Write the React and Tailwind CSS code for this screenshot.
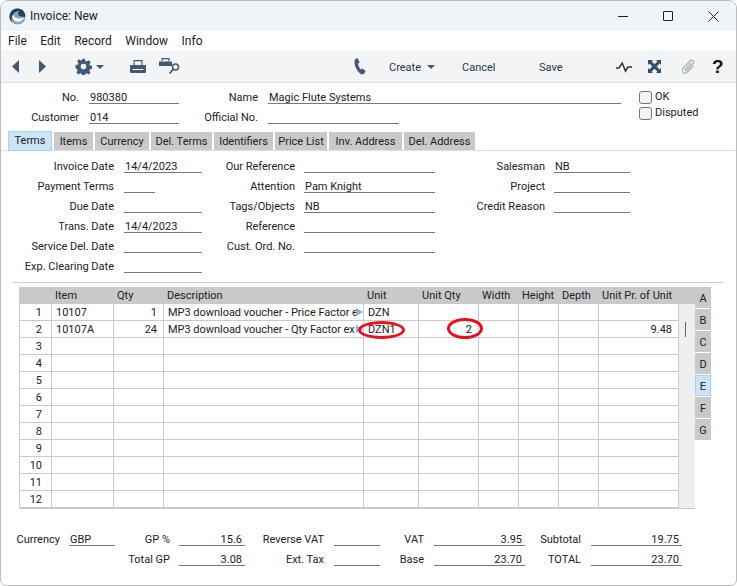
import React from 'react';

const tabs = [
  ['Terms', 'w-[44px]'],
  ['Items', 'w-[39px]'],
  ['Currency', 'w-[54px]'],
  ['Del. Terms', 'w-[61px]'],
  ['Identifiers', 'w-[59px]'],
  ['Price List', 'w-[52px]'],
  ['Inv. Address', 'w-[73px]'],
  ['Del. Address', 'w-[71px]'],
];

const cols = ['w-[32px]', 'w-[62px]', 'w-[50px]', 'w-[200px]', 'w-[55px]', 'w-[60px]', 'w-[40px]', 'w-[40px]', 'w-[40px]', 'w-[80px]'];
const heads = ['', 'Item', 'Qty', 'Description', 'Unit', 'Unit Qty', 'Width', 'Height', 'Depth', 'Unit Pr. of Unit'];

// descriptions are cut by the column in the screen, same as the reference
const rows = [
  ['1', '10107', '1', 'MP3 download voucher - Price Factor e', 'DZN', '', '', '', '', ''],
  ['2', '10107A', '24', 'MP3 download voucher - Qty Factor ex', 'DZN1', '2', '', '', '', '9.48'],
];
for (let i = 3; i <= 12; i++) rows.push([String(i), '', '', '', '', '', '', '', '', '']);

// label + underlined value
const Field = ({ label, labelW, w, value, right, gap = 'mr-[10px]' }) => (
  <div className="flex h-5 items-end">
    <span className={`${labelW} ${gap} h-[18px] text-right leading-[24px] whitespace-nowrap`}>{label}</span>
    <span className={`${w} h-[18px] border-b border-[#777] leading-[24px] ${right ? 'text-right pr-[3px]' : 'pl-[1px]'}`}>{value}</span>
  </div>
);

const Logo = () => (
  <svg width="17" height="17" viewBox="0 0 18 18">
    <circle cx="9" cy="9" r="8.500" fill="#8aa3b8" />
    <path d="M9 .5a8.500 8.500 0 00-6 14.500C1.500 10 4 4 11 3 9 5 9 7 11 8.500c2 1 4.500 1 6.500.5A8.500 8.500 0 009 .5z" fill="#20405f" />
    <path d="M3.500 9.500c1 3.500 4 5.500 7 5 2.500-.4 4.500-2 5.500-4.500-3 1.500-6 1.500-8 .5C6 10 5 9 5 7.500 4 8 3.700 8.700 3.500 9.500z" fill="#fff" />
  </svg>
);

const Gear = () => (
  <svg width="17" height="17" viewBox="0 0 24 24" fill="#3f5a76">
    <path fillRule="evenodd" d="M10 1h4l.6 3.200 2 .8 2.700-1.800 2.800 2.800-1.800 2.700.8 2 3.200.6v4l-3.200.6-.8 2 1.800 2.700-2.800 2.800-2.700-1.800-2 .8-.6 3.200h-4l-.6-3.200-2-.8-2.700 1.800-2.800-2.800 1.800-2.700-.8-2L.7 14v-4l3.200-.6.8-2-1.800-2.700 2.800-2.800 2.700 1.800 2-.8zM12 8a4 4 0 100 8 4 4 0 000-8z" />
  </svg>
);

const Printer = () => (
  <svg width="16" height="13" viewBox="0 0 16 13" fill="#3f5a76">
    <path d="M3.500 0h9v5h-1.200V1.200H4.700V5H3.500z" />
    <path d="M1 5h14a1 1 0 011 1v6a1 1 0 01-1 1H1a1 1 0 01-1-1V6a1 1 0 011-1zm1.500 4v1h11V9z" />
  </svg>
);

const PrintPreview = () => (
  <svg width="21" height="17" viewBox="0 0 21 17" fill="none">
    <path d="M2.500 0h8v3H9.300V1.200H3.700V3H2.500z" fill="#3f5a76" />
    <path d="M0 3.500h13v4.500H0z" fill="#3f5a76" />
    <circle cx="16.500" cy="9" r="3" stroke="#3f5a76" strokeWidth="1.500" />
    <path d="M14.200 11.300L10.500 15.500" stroke="#3f5a76" strokeWidth="1.800" />
  </svg>
);

const Phone = () => (
  <svg width="12" height="17" viewBox="0 0 12 17" fill="#3f5a76">
    <path d="M3.500 0L1 1.300C-.5 5 1.500 12.500 7.500 16.500L10.500 15.500 11.500 13 8.500 10.500 6.800 11.500C5 9.500 4.300 7.500 4 5.500L5.700 4.500z" />
  </svg>
);

const Caret = ({ color = '#3f5a76' }) => (
  <svg width="8" height="4" viewBox="0 0 8 4"><path d="M0 0h8L4 4z" fill={color} /></svg>
);

const CheckBox = ({ label }) => (
  <div className="flex h-4 items-center gap-[3px]">
    <span className="h-[13px] w-[13px] rounded-[3px] border border-[#777] bg-[#f4f4f4]" />
    <span>{label}</span>
  </div>
);

const App = () => {
  return (
    <div className="relative h-[586px] w-[737px] overflow-hidden rounded-t-lg rounded-b-md border border-[#bdbdbd] bg-white text-[11px] text-[#222] font-['Roboto',sans-serif]">
      {/* title bar */}
      <div className="flex h-[30px] items-center bg-[#eff4f9] text-[12px]">
        <div className="ml-[8px] mr-[4px] mt-[1px] flex"><Logo /></div>
        <span>Invoice: New</span>
        <div className="ml-auto flex items-center">
          <span className="h-px w-[10px] bg-[#222]" />
          <span className="ml-[35px] h-[10px] w-[10px] rounded-[1px] border border-[#222]" />
          <svg className="ml-[35px] mr-[17px]" width="11" height="11" viewBox="0 0 11 11">
            <path d="M.5.500l10 10M10.500.500l-10 10" stroke="#222" strokeWidth="1" />
          </svg>
        </div>
      </div>

      {/* menu */}
      <div className="flex h-[19px] items-center gap-[13.5px] pl-[7px] pt-[1px] text-[12px]">
        <span>File</span>
        <span>Edit</span>
        <span>Record</span>
        <span>Window</span>
        <span>Info</span>
      </div>

      {/* toolbar */}
      <div className="flex h-[33px] items-center border-b border-[#dcdcdc] bg-[#f3f4f5] pt-px text-[#24384d]">
        <svg className="ml-[11px]" width="7" height="13" viewBox="0 0 7 13"><path d="M7 0v13L0 6.500z" fill="#3f5a76" /></svg>
        <svg className="ml-[20px]" width="7" height="13" viewBox="0 0 7 13"><path d="M0 0v13l7-6.500z" fill="#3f5a76" /></svg>
        <div className="ml-[29px] flex"><Gear /></div>
        <div className="ml-[4px]"><Caret /></div>
        <div className="ml-[26px] flex"><Printer /></div>
        <div className="ml-[13px] flex"><PrintPreview /></div>
        <div className="ml-[174px] flex"><Phone /></div>
        <span className="ml-[23px] mt-[3px] w-[31px]">Create</span>
        <div className="ml-[7px] mt-[1px]"><Caret /></div>
        <span className="ml-[27px] mt-[3px] w-[34px]">Cancel</span>
        <span className="ml-[43px] mt-[3px] w-[24px]">Save</span>
        <svg className="ml-[53px]" width="16" height="12" viewBox="0 0 16 12" fill="none">
          <path d="M0 7h3l3.200-5 3.300 8L12 6h4" stroke="#333" strokeWidth="1.500" />
        </svg>
        <svg className="ml-[16px]" width="13" height="13" viewBox="0 0 13 13" fill="#2f4f70">
          <path d="M0 0h5L3.600 1.400 6.500 4.300 9.400 1.400 8 0h5v5l-1.400-1.400L8.700 6.500l2.900 2.900L13 8v5H8l1.400-1.400L6.500 8.700l-2.900 2.900L5 13H0V8l1.400 1.400 2.900-2.900L1.400 3.600 0 5z" />
        </svg>
        <svg className="ml-[21px]" width="13" height="16" viewBox="0 0 13 16" fill="none">
          <path d="M11.500 6.500L5.500 13c-1.500 1.600-3.500 1.600-4.500.5S0 10.500 1.500 9l6.500-7c1-1 2.300-1 3-.3s.7 2-.2 3L5 11c-.5.600-1.200.600-1.500.3s-.3-1 .2-1.500L9 4" stroke="#a9b3bd" strokeWidth="1.200" />
        </svg>
        <span className="ml-[17px] text-[19px] font-bold leading-none text-[#111] font-['Liberation_Sans',sans-serif]">?</span>
      </div>

      {/* header fields */}
      <div className="flex pt-px">
        <div className="flex flex-col">
          <Field label="No." labelW="w-[78px]" w="w-[90px]" value="980380" gap="mr-[10px]" />
          <Field label="Customer" labelW="w-[78px]" w="w-[90px]" value="014" gap="mr-[10px]" />
        </div>
        <div className="flex flex-col">
          <Field label="Name" labelW="w-[79px]" w="w-[353px]" value="Magic Flute Systems" />
          <Field label="Official No." labelW="w-[79px]" w="w-[131px]" value="" />
        </div>
        <div className="ml-[18px] mt-[5px] flex flex-col">
          <CheckBox label="OK" />
          <CheckBox label="Disputed" />
        </div>
      </div>

      {/* tabs */}
      <div className="mt-[7px] flex h-[20px] gap-[2px] border-b border-[#cfe4f7] pl-[7px]">
        {tabs.map(([name, w], i) => (
          <div
            key={name}
            className={`${w} flex items-center justify-center ${i === 0 ? 'h-[20px] border border-[#a9d0f0] bg-[#cce4f7]' : 'mt-[1px] h-[18px] bg-[#c9c9c9] pt-[3px]'}`}
          >
            {name}
          </div>
        ))}
      </div>

      {/* terms */}
      <div className="flex pt-[2px]">
        <div className="flex flex-col">
          <Field label="Invoice Date" labelW="w-[113px]" w="w-[78px]" value="14/4/2023" />
          <Field label="Payment Terms" labelW="w-[113px]" w="w-[31px]" value="" />
          <Field label="Due Date" labelW="w-[113px]" w="w-[78px]" value="" />
          <Field label="Trans. Date" labelW="w-[113px]" w="w-[78px]" value="14/4/2023" />
          <Field label="Service Del. Date" labelW="w-[113px]" w="w-[78px]" value="" />
          <Field label="Exp. Clearing Date" labelW="w-[113px]" w="w-[78px]" value="" />
        </div>
        <div className="flex flex-col">
          <Field label="Our Reference" labelW="w-[93px]" w="w-[131px]" value="" gap="mr-[9px]" />
          <Field label="Attention" labelW="w-[93px]" w="w-[131px]" value="Pam Knight" gap="mr-[9px]" />
          <Field label="Tags/Objects" labelW="w-[93px]" w="w-[131px]" value="NB" gap="mr-[9px]" />
          <Field label="Reference" labelW="w-[93px]" w="w-[131px]" value="" gap="mr-[9px]" />
          <Field label="Cust. Ord. No." labelW="w-[93px]" w="w-[131px]" value="" gap="mr-[9px]" />
        </div>
        <div className="flex flex-col">
          <Field label="Salesman" labelW="w-[110px]" w="w-[76px]" value="NB" gap="mr-[9px]" />
          <Field label="Project" labelW="w-[110px]" w="w-[76px]" value="" gap="mr-[9px]" />
          <Field label="Credit Reason" labelW="w-[110px]" w="w-[76px]" value="" gap="mr-[9px]" />
        </div>
      </div>

      <div className="ml-[12px] mt-[9px] h-px w-[710px] bg-[#cfcfcf]" />

      {/* matrix */}
      <div className="relative ml-[18px] mt-[4px] flex">
        <div className="w-[660px] border-b border-l border-[#c8c8c8]">
          <div className="flex h-[17px] bg-[#c9c9c9]">
            {heads.map((h, i) => (
              <div key={i} className={`${cols[i]} pl-[3px] leading-[17px] whitespace-nowrap`}>{h}</div>
            ))}
          </div>
          {rows.map((row) => (
            <div key={row[0]} className="flex h-[17px]">
              {row.map((cell, i) => (
                <div
                  key={i}
                  className={`${cols[i]} relative h-[17px] whitespace-nowrap border-r border-b border-[#cacaca] leading-[17px] ${i === 0 ? 'pr-[9px] text-right' : i === 2 || i === 5 || i === 9 ? 'pr-[6px] text-right' : i === 3 ? 'pl-[4px] tracking-[-0.03px]' : 'pl-[4px]'}`}
                >
                  {cell}
                  {i === 3 && cell && (
                    <svg className="absolute right-0 top-[4px]" width="7" height="8" viewBox="0 0 7 8"><path d="M0 0l7 4-7 4z" fill="#8eaed0" /></svg>
                  )}
                </div>
              ))}
            </div>
          ))}
        </div>
        <div className="flex flex-col">
          <div className="h-[17px] w-[16px] bg-[#c9c9c9]" />
          <div className="h-[205px] w-[16px] border-b border-[#c8c8c8] bg-[#efefef] pl-[6px] pt-[18px]">
            <div className="h-[15px] w-px bg-[#666]" />
          </div>
        </div>
        <div className="flex flex-col gap-px">
          {['A', 'B', 'C', 'D', 'E', 'F', 'G'].map((l) => (
            <div
              key={l}
              className={`flex h-[21px] w-[16px] items-center justify-center pt-[4px] ${l === 'E' ? 'border border-[#a9d0f0] bg-[#cce4f7]' : 'bg-[#c9c9c9]'}`}
            >
              {l}
            </div>
          ))}
        </div>
        {/* red rings drawn over the cells */}
        <div className="absolute left-[339px] top-[34px] h-[18px] w-[47px] rounded-[50%] border-[3px] border-[#e8101c]" />
        <div className="absolute left-[428px] top-[31px] h-[21px] w-[36px] rounded-[50%] border-[3px] border-[#e8101c]" />
      </div>

      {/* footer totals */}
      <div className="mt-[17px] flex">
        <div className="flex flex-col">
          <Field label="Currency" labelW="w-[59px]" w="w-[46px]" value="GBP" gap="mr-[9px]" />
        </div>
        <div className="flex flex-col">
          <Field label="GP %" labelW="w-[55px]" w="w-[66px]" value="15.6" right gap="mr-[9px]" />
          <Field label="Total GP" labelW="w-[55px]" w="w-[66px]" value="3.08" right gap="mr-[9px]" />
        </div>
        <div className="flex flex-col">
          <Field label="Reverse VAT" labelW="w-[79px]" w="w-[46px]" value="" gap="mr-[10px]" />
          <Field label="Ext. Tax" labelW="w-[79px]" w="w-[46px]" value="" gap="mr-[10px]" />
        </div>
        <div className="flex flex-col">
          <Field label="VAT" labelW="w-[44px]" w="w-[91px]" value="3.95" right />
          <Field label="Base" labelW="w-[44px]" w="w-[91px]" value="23.70" right />
        </div>
        <div className="flex flex-col">
          <Field label="Subtotal" labelW="w-[56px]" w="w-[91px]" value="19.75" right />
          <Field label="TOTAL" labelW="w-[56px]" w="w-[91px]" value="23.70" right />
        </div>
      </div>
    </div>
  );
};

export default App;
